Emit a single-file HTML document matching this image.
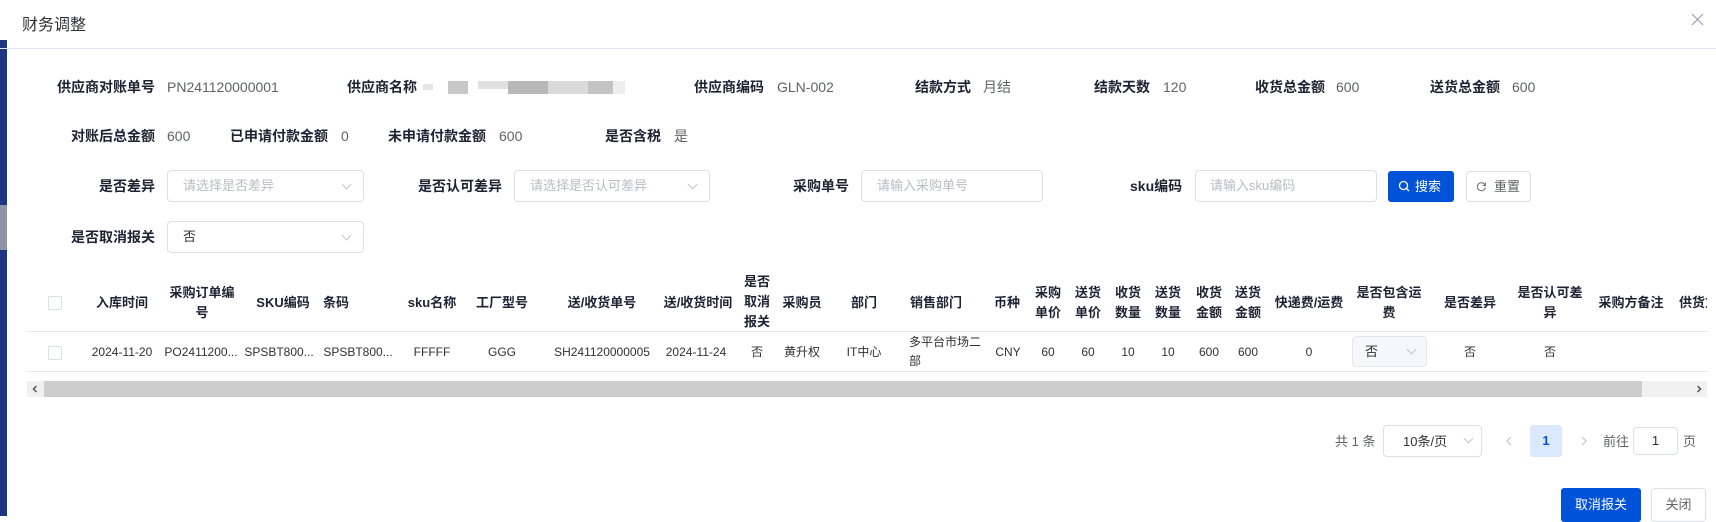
<!DOCTYPE html>
<html><head><meta charset="utf-8"><style>
*{margin:0;padding:0;box-sizing:border-box}
body{width:1716px;height:516px;overflow:hidden;background:#fff;font-family:"Liberation Sans","Noto Sans CJK SC",sans-serif;font-size:13px;color:#303133;position:relative}
.a{position:absolute;white-space:nowrap}
.lb{position:absolute;font-weight:bold;color:#1d2333;font-size:14px;white-space:nowrap;text-align:right;line-height:20px}
.v{position:absolute;color:#606266;font-size:14px;white-space:nowrap;line-height:20px}
.box{position:absolute;border:1px solid #dcdfe6;border-radius:4px;background:#fff}
.ph{position:absolute;color:#b8bcc4;font-size:13px;white-space:nowrap;line-height:18px}
.ar{position:absolute;width:7px;height:7px;border-right:1px solid #c0c4cc;border-bottom:1px solid #c0c4cc;transform:rotate(45deg)}
.th{position:absolute;font-weight:bold;color:#1d2333;font-size:13px;text-align:center;line-height:20px;transform:translateX(-50%)}
.td{position:absolute;color:#303133;font-size:12px;text-align:center;transform:translateX(-50%);white-space:nowrap;top:343px;line-height:18px}
</style></head><body>
<div class="a" style="left:0;top:40px;width:7px;height:476px;background:#1c3682"></div>
<div class="a" style="left:0;top:205px;width:7px;height:45px;background:#8d94a8"></div>

<div class="a" style="left:22px;top:11px;font-size:16px;color:#303133">财务调整</div>
<svg class="a" style="left:1691px;top:13px" width="13" height="13"><path d="M1 1L12 12M12 1L1 12" stroke="#9aa0ab" stroke-width="1.2"/></svg>
<div class="a" style="left:0;top:48px;width:1716px;height:1px;background:#dfe5f3"></div>

<div class="lb" style="right:1561px;top:77px">供应商对账单号</div><div class="v" style="left:167px;top:77px">PN241120000001</div>
<div class="lb" style="left:347px;top:77px">供应商名称</div>
<div class="a" style="left:423px;top:81px;width:202px;height:13px">
<div class="a" style="left:0;top:3px;width:10px;height:6px;background:#e4e4e4"></div>
<div class="a" style="left:25px;top:0;width:20px;height:13px;background:#c8c8c8"></div>
<div class="a" style="left:55px;top:0;width:30px;height:8px;background:#e0e0e0"></div>
<div class="a" style="left:85px;top:0;width:40px;height:13px;background:#b8b8b8"></div>
<div class="a" style="left:125px;top:0;width:40px;height:13px;background:#dadada"></div>
<div class="a" style="left:165px;top:0;width:25px;height:13px;background:#c4c4c4"></div>
<div class="a" style="left:190px;top:0;width:12px;height:13px;background:#eee"></div>
</div>
<div class="lb" style="left:694px;top:77px">供应商编码</div><div class="v" style="left:777px;top:77px">GLN-002</div>
<div class="lb" style="left:915px;top:77px">结款方式</div><div class="v" style="left:983px;top:77px">月结</div>
<div class="lb" style="left:1094px;top:77px">结款天数</div><div class="v" style="left:1163px;top:77px">120</div>
<div class="lb" style="left:1255px;top:77px">收货总金额</div><div class="v" style="left:1336px;top:77px">600</div>
<div class="lb" style="left:1430px;top:77px">送货总金额</div><div class="v" style="left:1512px;top:77px">600</div>

<div class="lb" style="right:1561px;top:126px">对账后总金额</div><div class="v" style="left:167px;top:126px">600</div>
<div class="lb" style="left:230px;top:126px">已申请付款金额</div><div class="v" style="left:341px;top:126px">0</div>
<div class="lb" style="left:388px;top:126px">未申请付款金额</div><div class="v" style="left:499px;top:126px">600</div>
<div class="lb" style="left:605px;top:126px">是否含税</div><div class="v" style="left:674px;top:126px">是</div>

<div class="lb" style="right:1561px;top:176px">是否差异</div>
<div class="box" style="left:167px;top:170px;width:197px;height:32px"></div><div class="ph" style="left:183px;top:177px">请选择是否差异</div><div class="ar" style="left:343px;top:181px"></div>
<div class="lb" style="left:418px;top:176px">是否认可差异</div>
<div class="box" style="left:514px;top:170px;width:196px;height:32px"></div><div class="ph" style="left:530px;top:177px">请选择是否认可差异</div><div class="ar" style="left:689px;top:181px"></div>
<div class="lb" style="left:793px;top:176px">采购单号</div>
<div class="box" style="left:861px;top:170px;width:182px;height:32px"></div><div class="ph" style="left:877px;top:177px">请输入采购单号</div>
<div class="lb" style="left:1130px;top:176px">sku编码</div>
<div class="box" style="left:1195px;top:170px;width:182px;height:32px"></div><div class="ph" style="left:1210px;top:177px">请输入sku编码</div>
<div class="a" style="left:1388px;top:171px;width:66px;height:31px;background:#0052d9;border-radius:3px;color:#fff;font-size:13px;line-height:31px;padding-left:27px">搜索</div>
<svg class="a" style="left:1398px;top:180px" width="12" height="12"><circle cx="5.5" cy="5.5" r="4" stroke="#fff" stroke-width="1.3" fill="none"/><path d="M8.5 8.5L11 11" stroke="#fff" stroke-width="1.3"/></svg>
<div class="box" style="left:1466px;top:171px;width:65px;height:31px;color:#606266;line-height:29px;padding-left:27px">重置</div>
<svg class="a" style="left:1476px;top:181px" width="11" height="11"><path d="M9 4A4 4 0 1 0 9.3 6.5" stroke="#777" stroke-width="1.1" fill="none"/><path d="M9.5 1.5V4.5H6.5" stroke="#777" stroke-width="1.1" fill="none"/></svg>

<div class="lb" style="right:1561px;top:227px">是否取消报关</div>
<div class="box" style="left:167px;top:221px;width:197px;height:32px"></div><div class="a" style="left:183px;top:228px;color:#303133;line-height:18px">否</div><div class="ar" style="left:343px;top:232px"></div>

<div class="a" style="left:27px;top:331px;width:1680px;height:1px;background:#e4e7ed"></div>
<div class="a" style="left:27px;top:371px;width:1680px;height:1px;background:#e4e7ed"></div>
<div class="a" style="left:48px;top:296px;width:14px;height:14px;border:1px solid #dcdfe6;border-radius:2px"></div>
<div class="a" style="left:48px;top:346px;width:14px;height:14px;border:1px solid #dcdfe6;border-radius:2px"></div>

<div class="th" style="left:122px;top:293px">入库时间</div>
<div class="th" style="left:202px;top:283px;width:70px">采购订单编<br>号</div>
<div class="th" style="left:283px;top:293px">SKU编码</div>
<div class="th" style="left:336px;top:293px">条码</div>
<div class="th" style="left:432px;top:293px">sku名称</div>
<div class="th" style="left:502px;top:293px">工厂型号</div>
<div class="th" style="left:602px;top:293px">送/收货单号</div>
<div class="th" style="left:698px;top:293px">送/收货时间</div>
<div class="th" style="left:757px;top:272px;width:30px">是否<br>取消<br>报关</div>
<div class="th" style="left:802px;top:293px">采购员</div>
<div class="th" style="left:864px;top:293px">部门</div>
<div class="th" style="left:936px;top:293px">销售部门</div>
<div class="th" style="left:1007px;top:293px">币种</div>
<div class="th" style="left:1048px;top:283px;width:30px">采购<br>单价</div>
<div class="th" style="left:1088px;top:283px;width:30px">送货<br>单价</div>
<div class="th" style="left:1128px;top:283px;width:30px">收货<br>数量</div>
<div class="th" style="left:1168px;top:283px;width:30px">送货<br>数量</div>
<div class="th" style="left:1209px;top:283px;width:30px">收货<br>金额</div>
<div class="th" style="left:1248px;top:283px;width:30px">送货<br>金额</div>
<div class="th" style="left:1309px;top:293px">快递费/运费</div>
<div class="th" style="left:1389px;top:283px;width:80px">是否包含运<br>费</div>
<div class="th" style="left:1470px;top:293px">是否差异</div>
<div class="th" style="left:1550px;top:283px;width:80px">是否认可差<br>异</div>
<div class="th" style="left:1631px;top:293px">采购方备注</div>
<div class="a" style="left:1679px;top:293px;font-weight:bold;color:#1d2333;width:28px;overflow:hidden;line-height:20px">供货方</div>

<div class="td" style="left:122px">2024-11-20</div>
<div class="td" style="left:201px">PO2411200...</div>
<div class="td" style="left:279px">SPSBT800...</div>
<div class="td" style="left:358px">SPSBT800...</div>
<div class="td" style="left:432px">FFFFF</div>
<div class="td" style="left:502px">GGG</div>
<div class="td" style="left:602px">SH241120000005</div>
<div class="td" style="left:696px">2024-11-24</div>
<div class="td" style="left:757px">否</div>
<div class="td" style="left:802px">黄升权</div>
<div class="td" style="left:864px">IT中心</div>
<div class="a" style="left:909px;top:333px;line-height:19px;color:#303133;font-size:12px">多平台市场二<br>部</div>
<div class="td" style="left:1008px">CNY</div>
<div class="td" style="left:1048px">60</div>
<div class="td" style="left:1088px">60</div>
<div class="td" style="left:1128px">10</div>
<div class="td" style="left:1168px">10</div>
<div class="td" style="left:1209px">600</div>
<div class="td" style="left:1248px">600</div>
<div class="td" style="left:1309px">0</div>
<div class="box" style="left:1352px;top:336px;width:75px;height:31px;background:#f5f7fa;border-color:#e4e7ed"></div>
<div class="a" style="left:1365px;top:343px;line-height:18px">否</div><div class="ar" style="left:1408px;top:346px"></div>
<div class="td" style="left:1470px">否</div>
<div class="td" style="left:1550px">否</div>

<div class="a" style="left:27px;top:381px;width:1680px;height:16px;background:#f1f1f1"></div>
<div class="a" style="left:44px;top:381px;width:1598px;height:16px;background:#cdcdcd"></div>
<svg class="a" style="left:31px;top:385px" width="8" height="8"><path d="M5.5 1L2.5 4L5.5 7" stroke="#555" stroke-width="1.5" fill="none"/></svg>
<svg class="a" style="left:1695px;top:385px" width="8" height="8"><path d="M2.5 1L5.5 4L2.5 7" stroke="#555" stroke-width="1.5" fill="none"/></svg>

<div class="a" style="left:1335px;top:433px;color:#606266;line-height:18px">共 1 条</div>
<div class="box" style="left:1383px;top:425px;width:99px;height:32px"></div>
<div class="a" style="left:1403px;top:433px;color:#303133;line-height:18px">10条/页</div><div class="ar" style="left:1465px;top:435px"></div>
<svg class="a" style="left:1505px;top:436px" width="8" height="10"><path d="M6 1L2 5L6 9" stroke="#c0c4cc" stroke-width="1.2" fill="none"/></svg>
<div class="a" style="left:1530px;top:425px;width:32px;height:32px;background:#dbe8fd;border-radius:3px;color:#0052d9;text-align:center;line-height:32px;font-weight:bold">1</div>
<svg class="a" style="left:1580px;top:436px" width="8" height="10"><path d="M2 1L6 5L2 9" stroke="#c0c4cc" stroke-width="1.2" fill="none"/></svg>
<div class="a" style="left:1603px;top:433px;color:#606266;line-height:18px">前往</div>
<div class="box" style="left:1633px;top:427px;width:45px;height:28px;text-align:center;line-height:26px">1</div>
<div class="a" style="left:1683px;top:433px;color:#606266;line-height:18px">页</div>

<div class="a" style="left:1561px;top:488px;width:80px;height:34px;background:#0052d9;border-radius:3px;color:#fff;text-align:center;line-height:34px">取消报关</div>
<div class="box" style="left:1651px;top:488px;width:55px;height:34px;color:#606266;text-align:center;line-height:32px">关闭</div>
</body></html>
